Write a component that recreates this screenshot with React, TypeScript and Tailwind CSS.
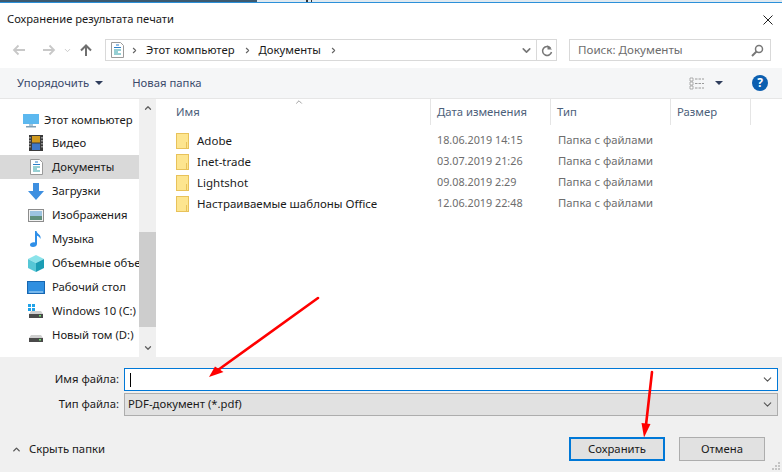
import { ChevronDown, ChevronUp } from 'lucide-react';

const FILES = [
  { name: 'Adobe', date: '18.06.2019 14:15' },
  { name: 'Inet-trade', date: '03.07.2019 21:26' },
  { name: 'Lightshot', date: '09.08.2019 2:29' },
  { name: 'Настраиваемые шаблоны Office', date: '12.06.2019 22:48' },
];

const Arrow = ({ flip = false, color = '#c8c8c8' }: { flip?: boolean; color?: string }) => (
  <svg width="14" height="12" viewBox="0 0 14 12" style={{ transform: flip ? 'scaleX(-1)' : undefined }}>
    <path d="M13 6H2M6.500 1.500 2 6l4.500 4.500" fill="none" stroke={color} strokeWidth="1.800" />
  </svg>
);

const DocIcon = () => (
  <svg width="13" height="16" viewBox="0 0 13 16">
    <path d="M.5.5h9l3 3v12H.5z" fill="#fff" stroke="#9a9a9a" />
    <path d="M5 3h3M3 5.500h7" stroke="#2a7fc9" />
    <path d="M3 8h7M3 10h4M3 12h7" stroke="#2fa0a8" />
  </svg>
);

const FolderIcon = () => (
  <svg width="13" height="16" viewBox="0 0 13 16">
    <rect x=".5" y=".5" width="12" height="15" fill="#fde58f" stroke="#e8c25a" />
    <path d="M10.500 15V9" stroke="#e8c25a" />
  </svg>
);

const NAV_ICONS: Record<string, React.ReactNode> = {
  video: (
    <svg width="14" height="16" viewBox="0 0 14 16">
      <rect width="14" height="16" fill="#3a3a3a" />
      <rect x="3" y="1" width="8" height="6.500" fill="#d09a20" />
      <rect x="3" y="8.500" width="8" height="6.500" fill="#3f78c8" />
      <path d="M1 2v12M13 2v12" stroke="#ddd" strokeDasharray="1.500 1.500" />
    </svg>
  ),
  down: (
    <svg width="16" height="17" viewBox="0 0 16 17">
      <path d="M5 0h6v8h5l-8 9-8-9h5z" fill="#3d8fe0" />
    </svg>
  ),
  images: (
    <svg width="16" height="13" viewBox="0 0 16 13">
      <rect x=".5" y=".5" width="15" height="12" fill="#f2f2f2" stroke="#8c8c8c" />
      <rect x="2" y="2" width="12" height="5" fill="#9cc3e0" />
      <rect x="2" y="7" width="12" height="4" fill="#5f8f7c" />
    </svg>
  ),
  music: (
    <svg width="12" height="16" viewBox="0 0 12 16">
      <path d="M5 0h1.500c.5 3 5 3.500 4 8-.7-2-2.500-3-3.500-3.200V13c0 2-2 3-4 3-1.800 0-3-1-3-2.300C0 12 2.500 11 5 11.500z" fill="#2f8fe8" />
    </svg>
  ),
  cube: (
    <svg width="16" height="17" viewBox="0 0 16 17">
      <path d="M8 0l8 4-8 4-8-4z" fill="#8be3ea" />
      <path d="M0 4l8 4v9l-8-4z" fill="#56c7d6" />
      <path d="M16 4 8 8v9l8-4z" fill="#1b9db4" />
    </svg>
  ),
  desktop: (
    <svg width="18" height="13" viewBox="0 0 18 13">
      <rect x=".5" y=".5" width="17" height="12" fill="#2f8fe0" stroke="#1766b0" />
      <path d="M2 11h14" stroke="#bfe0f8" />
    </svg>
  ),
};

const Drive = ({ windows = false }: { windows?: boolean }) => (
  <svg width="16" height="14" viewBox="0 0 16 14">
    {windows && <path d="M0 0h3v3H0zM4 0h3v3H4zM0 4h3v3H0zM4 4h3v3H4z" fill="#1fa2e8" />}
    <path d="M3 7h10l2 3H1z" fill="#cfcfcf" />
    <rect x="1" y="10" width="14" height="4" fill="#4a4a4a" />
    <rect x="11" y="11" width="2" height="1.500" fill="#6fe06f" />
  </svg>
);

const SIDEBAR = [
  { label: 'Видео', icon: NAV_ICONS.video },
  { label: 'Документы', icon: <DocIcon />, active: true },
  { label: 'Загрузки', icon: NAV_ICONS.down },
  { label: 'Изображения', icon: NAV_ICONS.images },
  { label: 'Музыка', icon: NAV_ICONS.music },
  { label: 'Объемные объекты', icon: NAV_ICONS.cube },
  { label: 'Рабочий стол', icon: NAV_ICONS.desktop },
  { label: 'Windows 10 (C:)', icon: <Drive windows /> },
  { label: 'Новый том (D:)', icon: <Drive /> },
];

export default function App() {
  return (
    <div className="relative w-[782px] h-[473px] overflow-hidden bg-white text-[11.3px] text-[#1a1a1a] font-['Noto_Sans',sans-serif]">
      <div className="flex h-[2px]">
        <div className="w-[257px] bg-[#3d5a70]" />
        <div className="flex-1 bg-[#dfe9f0] relative">
          <span className="absolute left-[49px] top-0 w-[2px] h-[2px] bg-[#333]" />
          <span className="absolute left-[54px] top-0 w-[1px] h-[2px] bg-[#333]" />
        </div>
      </div>
      <div className="h-[1px] bg-[#2b90d9]" />

      {/* title */}
      <div className="h-[33px] flex items-center justify-between pl-[7px] pr-[9px]">
        <span className="text-[11.2px]">Сохранение результата печати</span>
        <svg width="10" height="10" viewBox="0 0 10 10">
          <path d="M.5.500l9 9M9.500.500l-9 9" stroke="#222" />
        </svg>
      </div>

      {/* nav */}
      <div className="h-[32px] flex items-start pt-[3px]">
        <div className="w-[105px] h-[22px] flex items-center pl-[12px] shrink-0">
          <Arrow />
          <div className="ml-[16px]"><Arrow flip /></div>
          <ChevronDown size={9} className="ml-[7px] text-[#c8c8c8]" strokeWidth={2.500} />
          <svg width="14" height="13" viewBox="0 0 14 13" className="ml-[7px]">
            <path d="M7 12V2M2 6.500 7 1.500l5 5" fill="none" stroke="#6f6f6f" strokeWidth="2" />
          </svg>
        </div>
        <div className="w-[452px] h-[22px] border border-[#d9d9d9] flex items-center">
          <div className="ml-[5px] flex items-center"><DocIcon /></div>
          <ChevronDown size={9} className="-rotate-90 ml-[6px] text-[#666]" strokeWidth={3} />
          <span className="ml-[7px]">Этот компьютер</span>
          <ChevronDown size={9} className="-rotate-90 ml-[8px] text-[#666]" strokeWidth={3} />
          <span className="ml-[7px]">Документы</span>
          <ChevronDown size={9} className="-rotate-90 ml-[8px] text-[#666]" strokeWidth={3} />
          <div className="ml-auto w-[20px] flex justify-center">
            <ChevronDown size={13} className="text-[#777]" strokeWidth={3} />
          </div>
          <div className="w-[20px] h-full border-l border-[#d9d9d9] flex items-center justify-center">
            <svg width="12" height="13" viewBox="0 0 12 13">
              <path d="M9.500 4A4.500 4.500 0 1 0 10.500 8" fill="none" stroke="#777" strokeWidth="1.500" />
              <path d="M6.500 1v4.500h4.500z" fill="#777" />
            </svg>
          </div>
        </div>
        <div className="ml-[12px] w-[202px] h-[22px] border border-[#d9d9d9] flex items-center pl-[8px] pr-[6px] justify-between text-[#6d6d6d]">
          <span className="text-[11.6px]">Поиск: Документы</span>
          <svg width="13" height="13" viewBox="0 0 13 13">
            <circle cx="8" cy="5" r="3.500" fill="none" stroke="#777" strokeWidth="1.500" />
            <path d="M5.500 7.500 1 12" stroke="#777" strokeWidth="2" />
          </svg>
        </div>
      </div>

      {/* toolbar */}
      <div className="h-[30px] bg-[#f5f6f7] flex items-center text-[#3a4a6b]">
        <span className="ml-[17px]">Упорядочить</span>
        <span className="ml-[6px] w-0 h-0 border-x-[4px] border-x-transparent border-t-[4px] border-t-[#2f3d5c]" />
        <span className="ml-[29px]">Новая папка</span>
        <svg width="16" height="13" viewBox="0 0 16 13" className="ml-auto">
          <path d="M1 1h3v3H1zM1 5h3v3H1zM1 9h3v3H1z" fill="#fff" stroke="#8c8c8c" strokeWidth=".7" />
          <path d="M6 2h9M6 6.500h9M6 11h9" stroke="#9a9a9a" strokeDasharray="2.500 1" />
        </svg>
        <span className="ml-[10px] w-0 h-0 border-x-[4px] border-x-transparent border-t-[4px] border-t-[#2f3d5c]" />
        <span className="ml-[29px] mr-[14px] w-[16px] h-[16px] rounded-full bg-[#0c5fb0] text-white font-bold text-[12px] leading-[16px] text-center">?</span>
      </div>

      {/* main */}
      <div className="h-[259px] flex border-t border-[#e6e6e6]">
        <div className="w-[139px] shrink-0 overflow-hidden pt-[11px]">
          <div className="h-[21px] flex items-center pl-[23px] whitespace-nowrap">
            <svg width="16" height="14" viewBox="0 0 16 14" className="shrink-0">
              <rect width="16" height="10" fill="#5cb8ef" />
              <rect x="6" y="10" width="4" height="2" fill="#a9c6d8" />
              <rect x="3" y="12" width="10" height="1.500" fill="#7f9fb5" />
            </svg>
            <span className="ml-[5px]">Этот компьютер</span>
          </div>
          {SIDEBAR.map(item => (
            <div key={item.label} className={`h-[24px] flex items-center whitespace-nowrap ${item.active ? 'bg-[#d9d9d9]' : ''}`}>
              <div className="w-[52px] shrink-0 flex justify-center pl-[26px] pr-[6px]">{item.icon}</div>
              <span>{item.label}</span>
            </div>
          ))}
        </div>

        <div className="w-[17px] shrink-0 bg-[#f0f0f0] flex flex-col">
          <div className="h-[17px] flex items-center justify-center">
            <ChevronUp size={10} className="text-[#606060]" strokeWidth={3} />
          </div>
          <div className="h-[116px]" />
          <div className="h-[95px] bg-[#cdcdcd]" />
          <div className="flex-1 flex items-end justify-center pb-[4px]">
            <ChevronDown size={10} className="text-[#606060]" strokeWidth={3} />
          </div>
        </div>

        <div className="flex-1 pl-[1px] relative">
          <div className="flex h-[26px] text-[#4c607a]">
            <div className="w-[274px] border-r border-[#e5e5e5] pl-[19px] leading-[26px]">Имя</div>
            <div className="w-[120px] border-r border-[#e5e5e5] pl-[6px] leading-[26px]">Дата изменения</div>
            <div className="w-[120px] border-r border-[#e5e5e5] pl-[6px] leading-[26px]">Тип</div>
            <div className="w-[80px] border-r border-[#e5e5e5] pl-[6px] leading-[26px]">Размер</div>
          </div>
          <ChevronUp size={10} strokeWidth={1.500} className="absolute left-[138px] -top-[2px] text-[#666]" />
          <div className="pt-[5px]">
            {FILES.map(f => (
              <div key={f.name} className="h-[21px] flex items-center">
                <div className="w-[21px] ml-[19px] shrink-0"><FolderIcon /></div>
                <span className="w-[240px] shrink-0 text-[11.5px]">{f.name}</span>
                <span className="w-[121px] shrink-0 text-[#6d6d6d] text-[10.8px]">{f.date}</span>
                <span className="text-[#6d6d6d]">Папка с файлами</span>
              </div>
            ))}
          </div>
        </div>
      </div>

      {/* bottom */}
      <div className="h-[115px] bg-[#f0f0f0] pt-[11px] relative">
        <div className="flex items-center h-[23px] mb-[2px]">
          <span className="w-[119px] text-right">Имя файла:</span>
          <div className="ml-[5px] w-[654px] h-[23px] bg-white border border-[#0078d7] flex items-center justify-between pl-[5px] pr-[3px]">
            <span className="w-[1px] h-[14px] bg-black" />
            <ChevronDown size={13} className="text-[#555]" />
          </div>
        </div>
        <div className="flex items-center h-[23px]">
          <span className="w-[119px] text-right">Тип файла:</span>
          <div className="ml-[5px] w-[654px] h-[23px] bg-[#e1e1e1] border border-[#adadad] flex items-center justify-between pl-[3px] pr-[3px]">
            <span>PDF-документ (*.pdf)</span>
            <ChevronDown size={13} className="text-[#555]" />
          </div>
        </div>
        <div className="flex items-center mt-[21px] h-[24px]">
          <ChevronUp size={11} strokeWidth={3} className="ml-[11px] text-[#555]" />
          <span className="ml-[7px]">Скрыть папки</span>
          <div className="ml-auto mr-[17px] flex gap-[14px]">
            <div className="w-[96px] h-[24px] bg-[#e1e1e1] border-2 border-[#0078d7] flex items-center justify-center">Сохранить</div>
            <div className="w-[86px] h-[24px] bg-[#e1e1e1] border border-[#adadad] flex items-center justify-center">Отмена</div>
          </div>
        </div>
        <svg width="10" height="10" viewBox="0 0 10 10" className="absolute right-[1px] bottom-[1px]">
          <path d="M7 1h2v2H7zM4 4h2v2H4zM7 4h2v2H7zM1 7h2v2H1zM4 7h2v2H4zM7 7h2v2H7z" fill="#c4c4c4" />
        </svg>
      </div>

      {/* red annotation arrows */}
      <svg width="782" height="473" viewBox="0 0 782 473" className="absolute inset-0 pointer-events-none">
        <path d="M318 298 218 370" stroke="#ff0000" strokeWidth="2.600" strokeLinecap="round" />
        <path d="M209 377 215 366.500 223.500 372z" fill="#ff0000" />
        <path d="M652 372 646 425" stroke="#ff0000" strokeWidth="2.600" strokeLinecap="round" />
        <path d="M641.500 423 650.500 424 644 437.500z" fill="#ff0000" />
      </svg>
    </div>
  );
}
